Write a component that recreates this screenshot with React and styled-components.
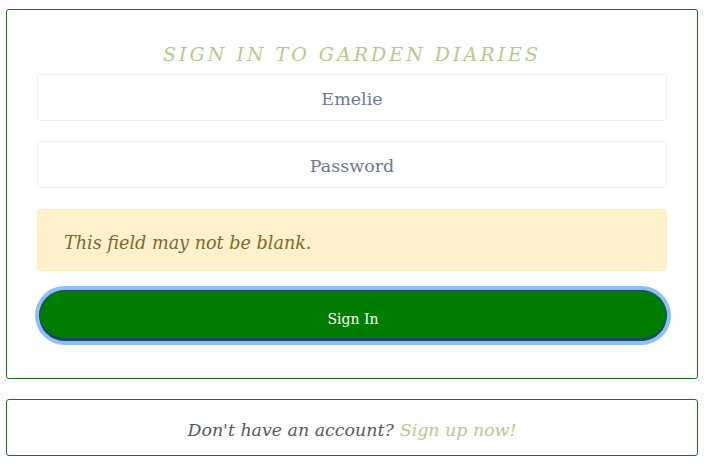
import React from "react";
import styled, { createGlobalStyle } from "styled-components";

const Global = createGlobalStyle`
  html, body { margin: 0; padding: 0; background: #fff; }
  body { font-family: "DejaVu Serif", serif; }
`;

const Page = styled.div`
  width: 692px;
  padding: 9px 0 0 6px;
  display: flex;
  flex-direction: column;
  gap: 20px;
`;

const Card = styled.div`
  border: 1px solid #1d6f1d;
  border-radius: 3px;
  background: #fff;
  box-sizing: border-box;
`;

const FormCard = styled(Card)`
  height: 370px;
  padding: 32px 30px 0 30px;
  display: flex;
  flex-direction: column;
`;

const Title = styled.h1`
  margin: 0 0 8px;
  font-size: 19px;
  line-height: 24px;
  font-weight: normal;
  font-style: italic;
  letter-spacing: 3px;
  text-transform: uppercase;
  text-align: center;
  color: #b3cb8c;
`;

const Input = styled.input`
  box-sizing: border-box;
  width: 100%;
  height: 47px;
  margin: 0 0 ${(p) => p.$gap}px;
  padding: 3px 0 0;
  border: 1px solid #eeeeee;
  border-radius: 3px;
  font-family: "DejaVu Serif", serif;
  font-size: 17.5px;
  text-align: center;
  color: #6b7489;
  outline: none;
  &::placeholder { color: #6f7890; opacity: 1; }
`;

const Alert = styled.div`
  box-sizing: border-box;
  height: 62px;
  margin: 0 0 16px;
  padding: 5px 26px 0;
  display: flex;
  align-items: center;
  background: #fff1cb;
  border: 1px solid #ffeebb;
  border-radius: 4px;
  color: #7f6630;
  font-size: 17.6px;
  font-style: italic;
`;

const Button = styled.button`
  box-sizing: border-box;
  width: 628px;
  height: 51px;
  margin: 3px 0 0 2px;
  padding: 8px 0 0;
  border: 1px solid #1c4466;
  border-bottom-width: 3px;
  border-radius: 26px;
  background: #007d00;
  color: #fff;
  font-family: "DejaVu Serif", serif;
  font-size: 14px;
  box-shadow: 0 0 0 4px #8fc0f5;
  cursor: pointer;
`;

const FooterCard = styled(Card)`
  height: 57px;
  display: flex;
  align-items: center;
  justify-content: center;
  padding-top: 5px;
  font-size: 17.4px;
  font-style: italic;
  color: #555b5b;
`;

const SignUp = styled.a`
  color: #b3cb8c;
  text-decoration: none;
  margin-left: 6px;
`;

export default function App() {
  return (
    <>
      <Global />
      <Page>
        <FormCard>
          <Title>Sign in to Garden Diaries</Title>
          <Input $gap={20} placeholder="Emelie" />
          <Input $gap={21} type="password" placeholder="Password" />
          <Alert>This field may not be blank.</Alert>
          <Button>Sign In</Button>
        </FormCard>
        <FooterCard>
          Don't have an account?<SignUp href="#">Sign up now!</SignUp>
        </FooterCard>
      </Page>
    </>
  );
}
